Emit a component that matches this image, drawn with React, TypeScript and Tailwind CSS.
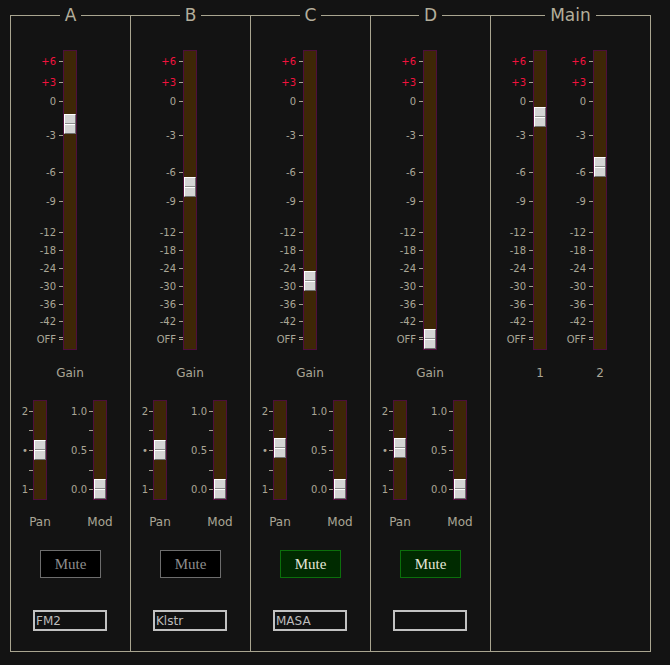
import React from "react";

type Tick = { y: number; label?: string; red?: boolean; double?: boolean };

// tick rows measured from the top edge of the track
const gainTicks: Tick[] = [
  { y: 11, label: "+6", red: true },
  { y: 32, label: "+3", red: true },
  { y: 51, label: "0" },
  { y: 85, label: "-3" },
  { y: 122, label: "-6" },
  { y: 151, label: "-9" },
  { y: 182, label: "-12" },
  { y: 200, label: "-18" },
  { y: 218, label: "-24" },
  { y: 236, label: "-30" },
  { y: 254, label: "-36" },
  { y: 271, label: "-42" },
  { y: 289, label: "OFF", double: true },
];

const panTicks: Tick[] = [
  { y: 11, label: "2" },
  { y: 30 },
  { y: 50, label: "•" },
  { y: 70 },
  { y: 89, label: "1" },
];

const modTicks: Tick[] = [
  { y: 11, label: "1.0" },
  { y: 30 },
  { y: 50, label: "0.5" },
  { y: 70 },
  { y: 89, label: "0.0" },
];

const channels = [
  { name: "A", gain: 64, pan: 40, mod: 79, muted: false, label: "FM2" },
  { name: "B", gain: 127, pan: 40, mod: 79, muted: false, label: "Klstr" },
  { name: "C", gain: 221, pan: 38, mod: 79, muted: true, label: "MASA" },
  { name: "D", gain: 279, pan: 38, mod: 79, muted: true, label: "" },
];

function Scale({ ticks, height, width, right }: { ticks: Tick[]; height: number; width: string; right: string }) {
  return (
    <div className={`relative ${width}`} style={{ height }}>
      {ticks.map((t, i) => (
        <React.Fragment key={i}>
          {t.double ? (
            <>
              <div className="absolute right-0 w-[4px] h-px bg-[#a6a292]" style={{ top: t.y - 2 }} />
              <div className="absolute right-0 w-[4px] h-px bg-[#a6a292]" style={{ top: t.y }} />
            </>
          ) : (
            <div className="absolute right-0 w-[4px] h-px bg-[#a6a292]" style={{ top: t.y }} />
          )}
          {t.label && (
            <div
              className={`absolute ${right} text-[10px] leading-[12px] whitespace-nowrap ${t.red ? "text-[#f2123e]" : "text-[#aaa696]"}`}
              style={{ top: t.y - 5 }}
            >
              {t.label}
            </div>
          )}
        </React.Fragment>
      ))}
    </div>
  );
}

function Track({ height, pos }: { height: number; pos: number }) {
  return (
    <div className="relative w-[14px] border border-[#4e0f3c] bg-[#3e2707]" style={{ height }}>
      <div
        className="absolute left-0 w-[12px] h-[20px] flex flex-col justify-center border border-t-white border-l-white border-r-[#6e6e6e] border-b-[#6e6e6e] bg-[#d4d4d4]"
        style={{ top: pos - 1 }}
      >
        <div className="h-px bg-[#8c8c8c]" />
        <div className="h-px bg-white" />
      </div>
    </div>
  );
}

function Legend({ children }: { children: React.ReactNode }) {
  return (
    <legend className="mx-auto px-[5px] text-[17px] leading-[21px] text-[#b3ae9b]">{children}</legend>
  );
}

function Channel({ ch }: { ch: (typeof channels)[number] }) {
  return (
    <fieldset className="w-[120px] min-w-0 h-[647px] border-y border-l border-[#a9a590]">
      <Legend>{ch.name}</Legend>

      <div className="flex pl-[12px] pt-[24px]">
        <Scale ticks={gainTicks} height={300} width="w-[40px]" right="right-[7px]" />
        <Track height={300} pos={ch.gain} />
      </div>
      <div className="mt-[15px] w-[118px] text-center text-[12px] leading-[16px] text-[#aaa696]">Gain</div>

      <div className="mt-[19px] flex">
        <div className="flex">
          <Scale ticks={panTicks} height={100} width="w-[22px]" right="right-[5px]" />
          <Track height={100} pos={ch.pan} />
        </div>
        <div className="ml-[6px] flex">
          <Scale ticks={modTicks} height={100} width="w-[40px]" right="right-[6px]" />
          <Track height={100} pos={ch.mod} />
        </div>
      </div>
      <div className="mt-[14px] flex pl-[9px] text-[12px] leading-[16px] text-[#aaa696]">
        <div className="w-[40px] text-center">Pan</div>
        <div className="ml-[20px] w-[40px] text-center">Mod</div>
      </div>

      <button
        className={`mt-[20px] ml-[29px] w-[61px] h-[28px] border [font-family:'Liberation_Serif',serif] text-[15px] ${
          ch.muted ? "bg-[#002a00] border-[#0b6f0b] text-[#e6e6d8]" : "bg-black border-[#6d6d6d] text-[#8d8d8d]"
        }`}
      >
        Mute
      </button>

      <input
        defaultValue={ch.label}
        className="mt-[32px] ml-[22px] block w-[74px] h-[21px] border-2 border-[#c2c2c2] bg-[#111111] px-px text-[12px] text-[#bcbcbc] outline-none"
      />
    </fieldset>
  );
}

export default function App() {
  return (
    <div className="min-h-[665px] bg-[#131313] pl-[10px] pt-[5px] [font-family:'DejaVu_Sans',sans-serif]">
      <div className="flex">
        {channels.map((ch) => (
          <Channel key={ch.name} ch={ch} />
        ))}

        <fieldset className="w-[161px] min-w-0 h-[647px] border border-[#a9a590]">
          <Legend>Main</Legend>
          <div className="flex gap-[6px] pl-[2px] pt-[24px]">
            <div className="flex">
              <Scale ticks={gainTicks} height={300} width="w-[40px]" right="right-[7px]" />
              <Track height={300} pos={57} />
            </div>
            <div className="flex">
              <Scale ticks={gainTicks} height={300} width="w-[40px]" right="right-[7px]" />
              <Track height={300} pos={107} />
            </div>
          </div>
          <div className="mt-[15px] flex pl-[42px] text-[12px] leading-[16px] text-[#aaa696]">
            <div className="w-[14px] text-center">1</div>
            <div className="ml-[46px] w-[14px] text-center">2</div>
          </div>
        </fieldset>
      </div>
    </div>
  );
}
